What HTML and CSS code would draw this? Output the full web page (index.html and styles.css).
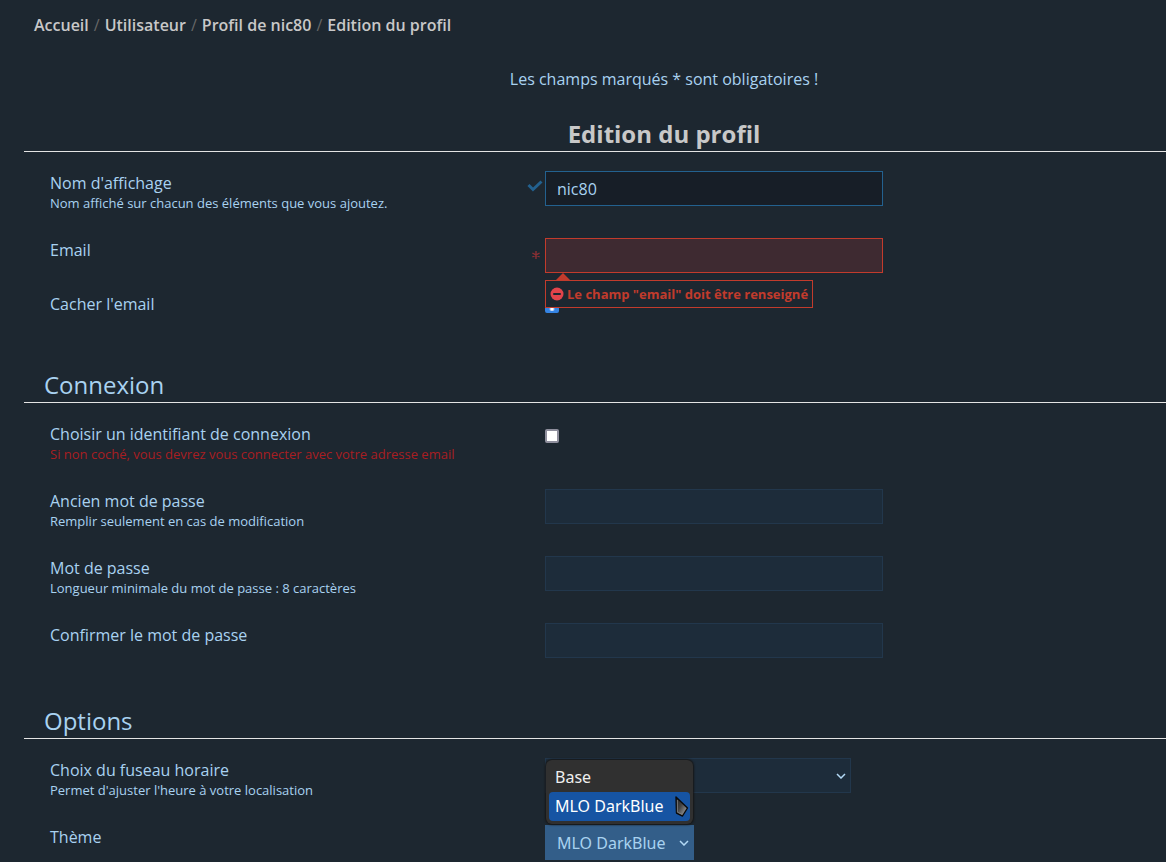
FILE: index.html
```html
<!DOCTYPE html>
<html lang="fr">
<head>
<meta charset="utf-8">
<title>Edition du profil</title>
<meta name="viewport" content="width=device-width, initial-scale=1">
<link rel="stylesheet" href="styles.css">
</head>
<body>
<nav class="breadcrumb" aria-label="Fil d'Ariane">
  <a href="#">Accueil</a><span class="sep">/</span><a href="#">Utilisateur</a><span class="sep">/</span><a href="#">Profil de nic80</a><span class="sep">/</span><a href="#">Edition du profil</a>
</nav>
<main class="content">
  <p class="notice">Les champs marqués * sont obligatoires !</p>
  <form class="profile">
    <h1 class="title">Edition du profil</h1>
    <section class="rows">
      <div class="row">
        <div class="label"><label for="name">Nom d'affichage</label><span class="hint">Nom affiché sur chacun des éléments que vous ajoutez.</span></div>
        <div class="field">
          <svg class="mark check" viewBox="0 0 16 12" aria-hidden="true"><path d="M1.5 5 6 9.5 14.5 1.5" fill="none" stroke="#23618f" stroke-width="3"/></svg>
          <input class="text valid" id="name" type="text" value="nic80">
        </div>
      </div>
      <div class="row">
        <div class="label"><label for="email">Email</label></div>
        <div class="field">
          <svg class="mark star" viewBox="0 0 8 8" aria-hidden="true"><path d="M4 0V8M.4 2 7.6 6M7.6 2 .4 6" fill="none" stroke="#8c3034" stroke-width="1.4"/></svg>
          <input class="text invalid" id="email" type="email" aria-describedby="email-error">
          <div class="error" id="email-error" role="alert">
            <svg class="stop" viewBox="0 0 14 14" aria-hidden="true"><circle cx="7" cy="7" r="6.5" fill="#e2444b"/><rect x="3" y="6" width="8" height="2" rx="1" fill="#1c2630"/></svg>
            <span>Le champ "email" doit être renseigné</span>
          </div>
        </div>
      </div>
      <div class="row">
        <div class="label"><label for="hide">Cacher l'email</label></div>
        <div class="field"><input class="tick" id="hide" type="checkbox" checked></div>
      </div>
    </section>

    <h2 class="heading">Connexion</h2>
    <section class="rows">
      <div class="row">
        <div class="label"><label for="login">Choisir un identifiant de connexion</label><span class="hint warn">Si non coché, vous devrez vous connecter avec votre adresse email</span></div>
        <div class="field"><input class="tick" id="login" type="checkbox"></div>
      </div>
      <div class="row">
        <div class="label"><label for="old">Ancien mot de passe</label><span class="hint">Remplir seulement en cas de modification</span></div>
        <div class="field"><input class="text" id="old" type="password"></div>
      </div>
      <div class="row">
        <div class="label"><label for="new">Mot de passe</label><span class="hint">Longueur minimale du mot de passe : 8 caractères</span></div>
        <div class="field"><input class="text" id="new" type="password"></div>
      </div>
      <div class="row">
        <div class="label"><label for="confirm">Confirmer le mot de passe</label></div>
        <div class="field"><input class="text" id="confirm" type="password"></div>
      </div>
    </section>

    <h2 class="heading">Options</h2>
    <section class="rows">
      <div class="row">
        <div class="label"><label for="zone">Choix du fuseau horaire</label><span class="hint">Permet d'ajuster l'heure à votre localisation</span></div>
        <div class="field">
          <div class="picker zone">
            <select class="select" id="zone"><option></option></select>
            <svg class="chevron" viewBox="0 0 10 6" aria-hidden="true"><path d="M1 1 5 5 9 1" fill="none" stroke="#b3d9f5" stroke-width="1.5"/></svg>
          </div>
        </div>
      </div>
      <div class="row">
        <div class="label"><label for="theme">Thème</label></div>
        <div class="field">
          <div class="picker theme">
            <select class="select open" id="theme"><option>Base</option><option selected>MLO DarkBlue</option></select>
            <svg class="chevron" viewBox="0 0 10 6" aria-hidden="true"><path d="M1 1 5 5 9 1" fill="none" stroke="#b3d9f5" stroke-width="1.5"/></svg>
            <div class="menu" role="listbox" aria-label="Thème">
              <div class="option" role="option" aria-selected="false">Base</div>
              <div class="option active" role="option" aria-selected="true">MLO DarkBlue</div>
              <svg class="pointer" viewBox="0 0 14 22" aria-hidden="true">
                <defs><linearGradient id="steel" x1="0" y1="0" x2="1" y2="1"><stop offset="0" stop-color="#222"/><stop offset=".45" stop-color="#444"/><stop offset="1" stop-color="#bbb"/></linearGradient></defs>
                <path d="M1 1 12.5 12 7.5 20 1.5 17Z" fill="url(#steel)" stroke="#0a0a0a" stroke-width="1.4" stroke-linejoin="round"/>
                <path d="M2.4 4V16.2L7 18.4" fill="none" stroke="#888" stroke-width=".8"/>
              </svg>
            </div>
          </div>
        </div>
      </div>
    </section>
  </form>
</main>
</body>
</html>
```

FILE: styles.css
```css
* { box-sizing: border-box; }

body {
  margin: 0;
  background: #1d2730;
  color: #a9d2f0;
  font: 16px/24px "Open Sans", "Noto Sans", sans-serif;
}

.breadcrumb { padding: 13px 34px 0; font-weight: 600; }
.breadcrumb a { color: #c8c8c8; text-decoration: none; }
.sep { margin: 0 5px; color: #666; font-weight: 400; }

.content { padding: 30px 0 0 24px; }
.notice { margin: 0; padding-left: 138px; text-align: center; }

.title, .heading {
  margin: 0;
  border-bottom: 1px solid #e4e4e4;
  font-size: 24px;
  line-height: 35px;
}
.title { margin-top: 25px; padding-left: 138px; color: #c8c8c8; text-align: center; }
.heading { margin-top: 45px; padding-left: 20px; font-weight: 400; }

.rows { display: flex; flex-direction: column; gap: 19px; padding: 19px 0 0 26px; }
.row { display: grid; grid-template-columns: minmax(0, 495px) minmax(0, 1fr); }
.label { display: flex; flex-direction: column; align-items: flex-start; }
.hint { padding-bottom: 8px; font-size: 13px; line-height: 16px; }
.warn { color: #a81e22; }

.field { position: relative; }
.text {
  display: block;
  width: 338px;
  max-width: 100%;
  height: 35px;
  padding: 0 11px;
  border: 1px solid #22374c;
  background: #1d2c3a;
  color: #a9d2f0;
  font: inherit;
}
.valid { border-color: #23618f; background: #171e27; }
.invalid { border-color: #c23b2c; background: #3e2a31; }
.text:focus { outline: none; }

.mark { position: absolute; right: 100%; }
.check { top: 9px; width: 16px; height: 12px; margin-right: 2px; }
.star { top: 13px; width: 8px; height: 8px; margin-right: 5px; }

.tick {
  display: block;
  width: 14px;
  height: 14px;
  margin: 7px 0 9px;
  border: 2px solid #8f8f9d;
  border-radius: 2px;
  background: #fff;
  appearance: none;
}
.tick:checked { border-color: #3584e4; background: radial-gradient(circle at 5px 8px, #fff 1px, #3584e4 3px); }

.error {
  position: absolute;
  z-index: 1;
  top: 42px;
  left: 0;
  display: flex;
  align-items: center;
  gap: 3px;
  height: 28px;
  padding: 0 4px;
  border: 1px solid #c23b2c;
  background: #1d2730;
  color: #c23b2c;
  font-size: 13px;
  font-weight: 700;
  white-space: nowrap;
}
.error::before {
  content: "";
  position: absolute;
  bottom: 100%;
  left: 9px;
  border: solid transparent;
  border-width: 0 8px 8px;
  border-bottom-color: #c23b2c;
}
.stop { width: 14px; height: 14px; }

.picker { position: relative; max-width: 100%; }
.zone { width: 306px; }
.theme { width: 149px; }
.select {
  display: block;
  width: 100%;
  height: 35px;
  padding: 0 11px;
  border: 1px solid #22374c;
  border-radius: 0;
  background: #1d2c3a;
  color: #a9d2f0;
  font: 16px/24px "Noto Sans", sans-serif;
  appearance: none;
}
.open { border-color: #335e89; background: #335e89; }
.chevron { position: absolute; top: 15px; right: 5px; width: 10px; height: 6px; pointer-events: none; }

.menu {
  position: absolute;
  right: 1px;
  bottom: 100%;
  left: 1px;
  margin-bottom: 1px;
  padding: 3px;
  border-radius: 6px;
  background: #303030;
  box-shadow: 0 0 2px 1px #161616;
  color: #eee;
  font: 16px/29px "Noto Sans", sans-serif;
}
.option { padding: 0 6px; border-radius: 4px; white-space: nowrap; }
.active { background: #1654a3; color: #fff; }
.pointer { position: absolute; right: 4px; bottom: 6px; width: 14px; height: 22px; }
```
